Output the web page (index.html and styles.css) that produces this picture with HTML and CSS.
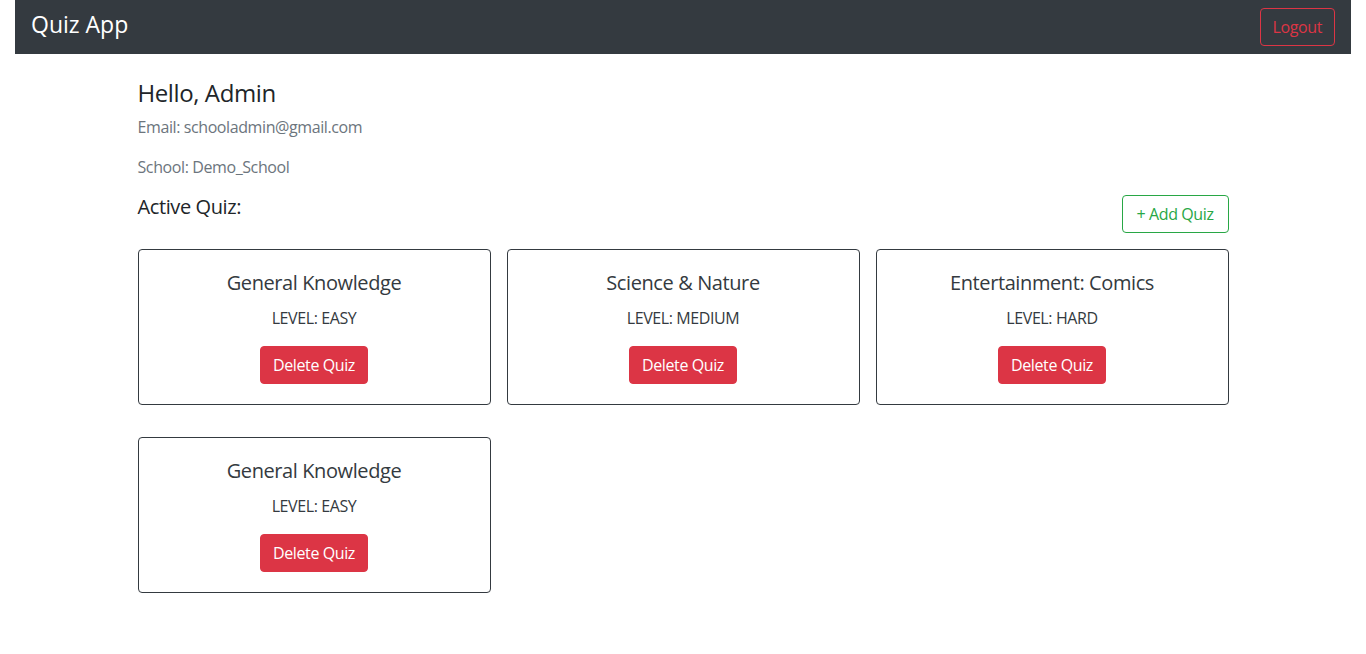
FILE: index.html
```html
<!DOCTYPE html>
<html lang="en">
<head>
<meta charset="utf-8">
<title>Quiz App</title>
<link rel="stylesheet" href="styles.css">
</head>
<body>
<div class="app">
  <nav class="navbar">
    <span class="brand">Quiz App</span>
    <button class="btn btn-outline-danger">Logout</button>
  </nav>
  <main class="container">
    <h4 class="hello">Hello, Admin</h4>
    <p class="muted">Email: schooladmin@gmail.com</p>
    <p class="muted">School: Demo_School</p>
    <div class="quiz-head">
      <h5 class="section-title">Active Quiz:</h5>
      <button class="btn btn-outline-success btn-add">+ Add Quiz</button>
    </div>
    <div class="cards">
      <div class="card">
        <h5 class="card-title">General Knowledge</h5>
        <p class="card-text">LEVEL: EASY</p>
        <button class="btn btn-danger">Delete Quiz</button>
      </div>
      <div class="card">
        <h5 class="card-title">Science &amp; Nature</h5>
        <p class="card-text">LEVEL: MEDIUM</p>
        <button class="btn btn-danger">Delete Quiz</button>
      </div>
      <div class="card">
        <h5 class="card-title">Entertainment: Comics</h5>
        <p class="card-text">LEVEL: HARD</p>
        <button class="btn btn-danger">Delete Quiz</button>
      </div>
      <div class="card">
        <h5 class="card-title">General Knowledge</h5>
        <p class="card-text">LEVEL: EASY</p>
        <button class="btn btn-danger">Delete Quiz</button>
      </div>
    </div>
  </main>
</div>
</body>
</html>
```
FILE: styles.css
```css
* { box-sizing: border-box; }
html, body { margin: 0; padding: 0; }
body {
  font-family: "Open Sans", "Noto Sans", sans-serif;
  font-size: 16px;
  line-height: 1.5;
  letter-spacing: -0.025em;
  color: #212529;
  background: #fff;
}
.app { padding: 0 15px; }
.navbar {
  background: #343a40;
  height: 54px;
  display: flex;
  align-items: center;
  justify-content: space-between;
  padding: 0 16px;
}
.brand {
  color: #fff;
  font-size: 23px;
  line-height: 30px;
  letter-spacing: 0;
  margin-top: -6px;
}
.btn {
  font-family: inherit;
  font-size: 16px;
  line-height: 24px;
  letter-spacing: -0.025em;
  padding: 6px 12px;
  border-radius: 4px;
  border: 1px solid transparent;
  background: transparent;
  cursor: pointer;
}
.btn-outline-danger { color: #dc3545; border-color: #dc3545; padding: 6px 12px 6px 12px; }
.btn-outline-success { color: #28a745; border-color: #28a745; }
.btn-add { padding: 6px 14px; }
.btn-danger { background: #dc3545; border-color: #dc3545; color: #fff; }
.container {
  width: 1091px;
  margin: 0 auto;
  padding-top: 25px;
}
.hello {
  font-size: 24px;
  font-weight: 400;
  line-height: 1.2;
  margin: 0 0 7px;
}
.muted { color: #6c757d; margin: 0 0 16px; }
.quiz-head {
  display: flex;
  justify-content: space-between;
  align-items: flex-start;
  margin-bottom: 16px;
}
.section-title {
  font-size: 20px;
  font-weight: 400;
  line-height: 1.2;
  margin: 0;
}
.cards {
  display: grid;
  grid-template-columns: repeat(3, 1fr);
  column-gap: 16px;
  row-gap: 32px;
}
.card {
  border: 1px solid #343a40;
  border-radius: 4px;
  padding: 20px;
  text-align: center;
  color: #343a40;
}
.card-title {
  font-size: 20px;
  font-weight: 400;
  line-height: 1.2;
  margin: 1px 0 11px;
}
.card-text { margin: 0 0 16px; }
```
